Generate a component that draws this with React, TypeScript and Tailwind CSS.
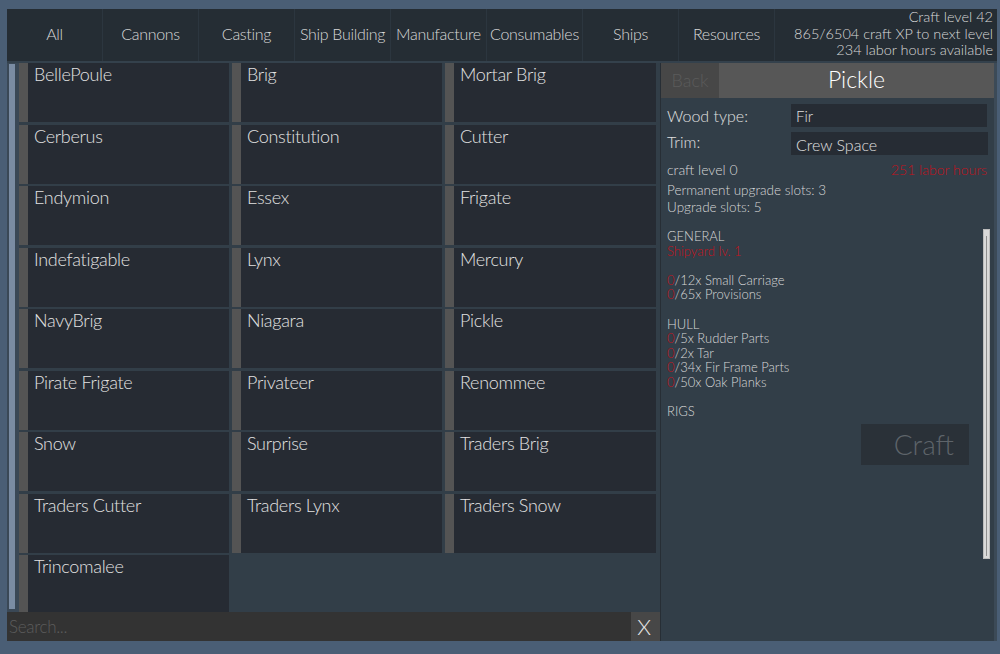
import React from "react";

const TABS = ["All", "Cannons", "Casting", "Ship Building", "Manufacture", "Consumables", "Ships", "Resources"];

const SHIPS = [
  "BellePoule", "Brig", "Mortar Brig",
  "Cerberus", "Constitution", "Cutter",
  "Endymion", "Essex", "Frigate",
  "Indefatigable", "Lynx", "Mercury",
  "NavyBrig", "Niagara", "Pickle",
  "Pirate Frigate", "Privateer", "Renommee",
  "Snow", "Surprise", "Traders Brig",
  "Traders Cutter", "Traders Lynx", "Traders Snow",
  "Trincomalee",
];

const GENERAL = ["12x Small Carriage", "65x Provisions"];
const HULL = ["5x Rudder Parts", "2x Tar", "34x Fir Frame Parts", "50x Oak Planks"];

function Req({ text }: { text: string }) {
  return (
    <div>
      <span className="text-[#c4121c]">0</span>/{text}
    </div>
  );
}

export default function App() {
  return (
    <div
      className="w-[1000px] h-[654px] bg-[#4a5e75] pt-[9px] px-[7px] overflow-hidden text-[#d8d8d8] font-light"
      style={{ fontFamily: "Lato, 'Open Sans', sans-serif" }}
    >
      <div className="w-[990px] h-[632px] flex flex-col bg-[#323e48]">
        {/* Top tab bar */}
        <div className="h-[52px] flex bg-[#252d34] border-b-2 border-[#34414c] box-content">
          {TABS.map((t) => (
            <div key={t} className="w-[96px] flex items-center justify-center pb-[2px] border-r border-[#2c363f] text-[16px] tracking-[-0.3px]">
              {t}
            </div>
          ))}
          <div className="flex-1 text-right pr-[4px] text-[14.5px] leading-[16.5px]">
            <div>Craft level 42</div>
            <div>865/6504 craft XP to next level</div>
            <div>234 labor hours available</div>
          </div>
        </div>

        <div className="flex flex-1 min-h-0">
          {/* Left: ship list */}
          <div className="w-[653px] flex flex-col">
            <div className="h-[549px] flex">
              <div className="w-[12px] bg-[#3a4856] pl-[2px] pr-[2px] pt-[1px] pb-[3px]">
                <div className="w-[6px] h-full bg-[#7a8ca3]" />
              </div>
              <div className="grid grid-cols-[210px_210px_211px] gap-x-[3px] gap-y-[2.5px] auto-rows-[59px] content-start">
                {SHIPS.map((s) => (
                  <div key={s} className="flex h-[59px]">
                    <div className="w-[9px] bg-[#545454]" />
                    <div className="flex-1 bg-[#262b33] pl-[6px] text-[18px] leading-[22px] tracking-[-0.3px] text-[#e2e2e2]">
                      {s}
                    </div>
                  </div>
                ))}
              </div>
            </div>
            <div className="h-[29px] flex">
              <div className="flex-1 bg-[#333333] text-[#5c5c5c] text-[17px] leading-[29px] pl-[2px] tracking-[-0.3px]">
                Search...
              </div>
              <div className="w-[29px] bg-[#474747] flex items-center justify-center pr-[3px] text-[22px] text-[#e8e8e8]">
                X
              </div>
            </div>
          </div>

          {/* Right: detail */}
          <div className="flex-1 flex flex-col border-l border-[#272e35] border-r-[3px] border-r-[#3c4a57]">
            <div className="h-[35px] flex">
              <div className="w-[58px] bg-[#474747] text-[#5b5b5b] text-[18px] flex items-center justify-center">
                Back
              </div>
              <div className="flex-1 bg-[#575757] text-white text-[23px] flex items-center justify-center pb-[2px]">
                Pickle
              </div>
            </div>
            <div className="flex-1 relative px-[6px] pt-[6px]">
              <div className="flex items-center h-[23px] mb-[5px]">
                <div className="w-[124px] text-[16px] text-[#e0e0e0]">Wood type:</div>
                <div className="w-[196px] h-[23px] bg-[#262c34] pl-[5px] text-[15px] leading-[25px] text-[#e0e0e0]">Fir</div>
              </div>
              <div className="flex items-center h-[23px]">
                <div className="w-[124px] text-[16px] text-[#e0e0e0] -mt-[4px]">Trim:</div>
                <div className="w-[197px] h-[23px] bg-[#262c34] pl-[5px] text-[16px] leading-[25px] text-[#e0e0e0]">Crew Space</div>
              </div>
              <div className="flex justify-between mt-[6px] text-[14px] leading-[18px]">
                <span>craft level 0</span>
                <span className="text-[#c4121c] pr-[1px]">251 labor hours</span>
              </div>
              <div className="mt-[3px] text-[13.5px] leading-[17px]">
                <div>Permanent upgrade slots: 3</div>
                <div>Upgrade slots: 5</div>
              </div>
              <div className="mt-[13px] text-[13px] leading-[14.5px] pr-[20px]">
                <div>GENERAL</div>
                <div className="text-[#c4121c]">Shipyard lv. 1</div>
                <div className="h-[14.5px]" />
                {GENERAL.map((g) => <Req key={g} text={g} />)}
                <div className="h-[15px]" />
                <div>HULL</div>
                {HULL.map((h) => <Req key={h} text={h} />)}
                <div className="h-[15px]" />
                <div>RIGS</div>
              </div>
              <div className="flex justify-end pr-[19px] mt-[5px]">
                <div className="w-[108px] h-[41px] bg-[#2a3138] text-[#5e646a] text-[28px] flex items-center justify-end pr-[15px]">
                  Craft
                </div>
              </div>
              <div className="absolute right-[4px] top-[131px] w-[7px] h-[330px] bg-[#d9d9d9] border border-[#bcbcbc] pl-[2px] pt-[6px] pb-[2px]">
                <div className="w-[1px] h-full bg-[#8e8e8e]" />
              </div>
            </div>
          </div>
        </div>
      </div>
    </div>
  );
}
